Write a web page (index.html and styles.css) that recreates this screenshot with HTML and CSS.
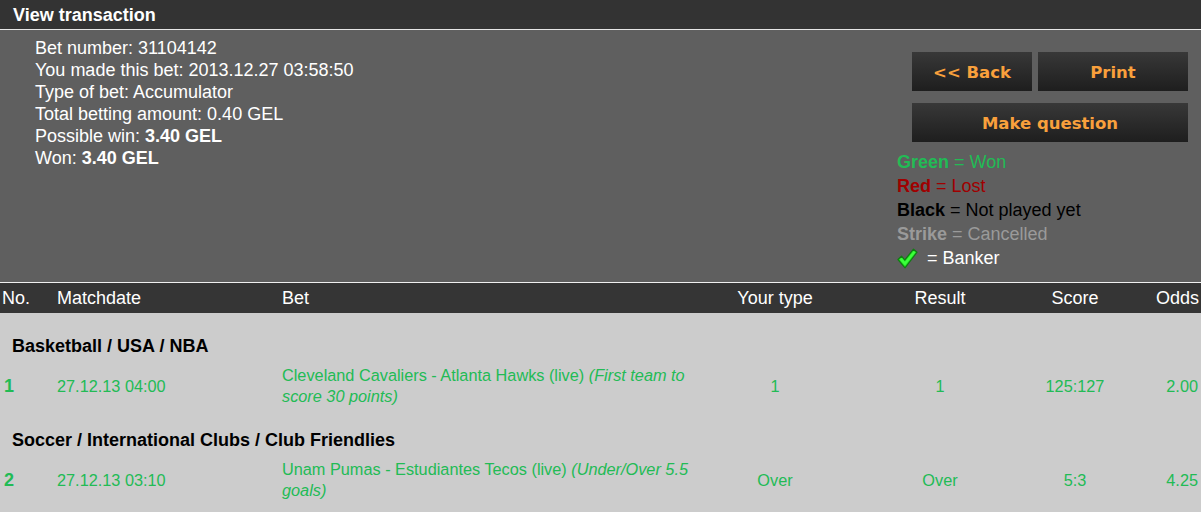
FILE: index.html
```html
<!DOCTYPE html>
<html>
<head>
<meta charset="utf-8">
<link rel="stylesheet" href="styles.css">
</head>
<body>
<div class="page">
  <div class="titlebar">View transaction</div>
  <div class="info">
    <div class="details">
      <div>Bet number: 31104142</div>
      <div>You made this bet: 2013.12.27 03:58:50</div>
      <div>Type of bet: Accumulator</div>
      <div>Total betting amount: 0.40 GEL</div>
      <div>Possible win: <b>3.40 GEL</b></div>
      <div>Won: <b>3.40 GEL</b></div>
    </div>
    <div class="side">
      <div class="buttons">
        <div class="btn-row">
          <a class="btn btn-back">&lt;&lt; Back</a>
          <a class="btn btn-print">Print</a>
        </div>
        <a class="btn btn-wide">Make question</a>
      </div>
      <div class="legend">
        <div class="lg-green"><b>Green</b> = Won</div>
        <div class="lg-red"><b>Red</b> = Lost</div>
        <div class="lg-black"><b>Black</b> = Not played yet</div>
        <div class="lg-strike"><b>Strike</b> = Cancelled</div>
        <div class="lg-banker">
          <svg class="check" width="21" height="21" viewBox="0 0 21 21">
            <path d="M1 11.5 L4.5 8.2 L7.8 12 L16.5 1.2 L20 4.2 L8 19.8 Z" fill="#22e622" stroke="#0f7d12" stroke-width="1.2" stroke-linejoin="round"/>
            <path d="M2.6 11.6 L4.6 9.8 L7.9 13.8 L16.7 3 L18.4 4.4 L8 17.6 Z" fill="#3cff3c"/>
          </svg>
          <span>= Banker</span>
        </div>
      </div>
    </div>
  </div>
  <div class="thead">
    <div class="c-no">No.</div>
    <div class="c-date">Matchdate</div>
    <div class="c-bet">Bet</div>
    <div class="c-type">Your type</div>
    <div class="c-res">Result</div>
    <div class="c-score">Score</div>
    <div class="c-odds">Odds</div>
  </div>
  <div class="tbody">
    <div class="group">Basketball / USA / NBA</div>
    <div class="row won">
      <div class="c-no"><b>1</b></div>
      <div class="c-date">27.12.13 04:00</div>
      <div class="c-bet">Cleveland Cavaliers - Atlanta Hawks (live) <i>(First team to score 30 points)</i></div>
      <div class="c-type">1</div>
      <div class="c-res">1</div>
      <div class="c-score">125:127</div>
      <div class="c-odds">2.00</div>
    </div>
    <div class="group">Soccer / International Clubs / Club Friendlies</div>
    <div class="row won">
      <div class="c-no"><b>2</b></div>
      <div class="c-date">27.12.13 03:10</div>
      <div class="c-bet">Unam Pumas - Estudiantes Tecos (live) <i>(Under/Over 5.5 goals)</i></div>
      <div class="c-type">Over</div>
      <div class="c-res">Over</div>
      <div class="c-score">5:3</div>
      <div class="c-odds">4.25</div>
    </div>
  </div>
</div>
</body>
</html>
```

FILE: styles.css
```css
* { box-sizing: border-box; }
html, body { margin: 0; padding: 0; }
body {
  font-family: "Liberation Sans", Arial, sans-serif;
  font-size: 18px;
  background: #cccccc;
  width: 1201px;
  overflow: hidden;
}
.page { width: 1201px; }

.titlebar {
  height: 30px;
  background: #333333;
  color: #ffffff;
  font-weight: bold;
  line-height: 30px;
  padding-left: 13px;
  border-bottom: 1px solid #e6e6e6;
}

.info {
  background: #5f5f5f;
  height: 252px;
  display: flex;
  justify-content: space-between;
  color: #ffffff;
}
.details {
  padding: 7px 0 0 35px;
  line-height: 22px;
}

.side {
  width: 304px;
  padding: 22px 13px 0 0;
  display: flex;
  flex-direction: column;
}
.buttons {
  margin-left: 15px;
  display: flex;
  flex-direction: column;
  gap: 12px;
}
.btn-row { display: flex; gap: 6px; }
.btn {
  display: flex;
  align-items: center;
  justify-content: center;
  height: 39px;
  padding-top: 2px;
  background: linear-gradient(#383838, #1e1e1e);
  color: #f9a03c;
  font-family: "DejaVu Sans", Verdana, sans-serif;
  font-weight: bold;
  font-size: 16.5px;
  text-decoration: none;
}
.btn-back { width: 120px; }
.btn-print { width: 150px; }
.btn-wide { width: 276px; }

.legend {
  margin-top: 8px;
  line-height: 24px;
}
.lg-green { color: #22bb55; }
.lg-red { color: #a00000; }
.lg-black { color: #000000; }
.lg-strike { color: #9a9a9a; }
.lg-banker { display: flex; align-items: center; gap: 9px; color: #ffffff; }
.check { display: block; }

.thead, .row {
  display: grid;
  grid-template-columns: 57px 225px 418px 150px 180px 90px 81px;
}
.thead {
  border-top: 1px solid #f0f0f0;
  background: #353535;
  color: #ffffff;
  height: 31px;
  align-items: center;
  line-height: 28px;
}
.thead .c-no { padding-left: 2px; }

.tbody {
  padding-bottom: 20px;
}
.group {
  font-weight: bold;
  color: #000000;
  line-height: 22px;
  padding-left: 12px;
  margin-top: 22px;
}
.row {
  margin-top: 8px;
  align-items: center;
  color: #22bb55;
  font-size: 16.3px;
}
.row .c-no { padding-left: 4px; font-size: 18px; }
.row .c-bet { line-height: 21px; }

.c-type, .c-res, .c-score { text-align: center; }
.c-odds { text-align: right; padding-right: 3px; }
.thead .c-odds { padding-right: 2px; }
```
